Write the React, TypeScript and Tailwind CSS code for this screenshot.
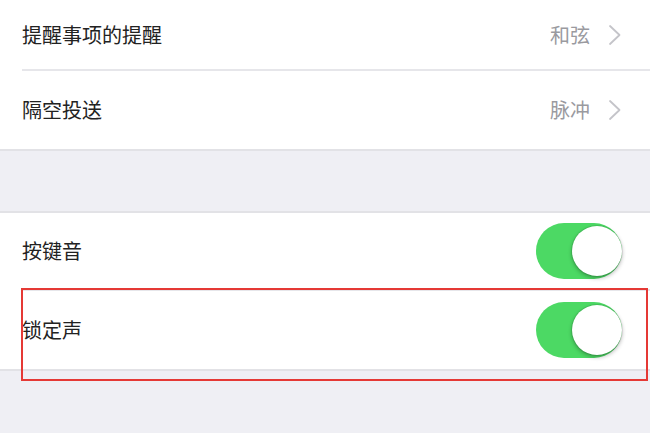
import React from "react"

const font = `"Noto Sans CJK SC", "Noto Sans", sans-serif`

function Chevron() {
  return (
    <svg width="14" height="22" viewBox="0 0 14 22" fill="none" className="ml-[18px]">
      <path d="M2 2 L11.5 11 L2 20" stroke="#c4c4c9" strokeWidth="1.8" strokeLinecap="round" strokeLinejoin="round" />
    </svg>
  )
}

function Toggle() {
  return (
    <div className="relative h-[56px] w-[86px] rounded-full bg-[#4cd964]">
      <div className="absolute right-0 top-[3px] h-[50px] w-[50px] rounded-full bg-white shadow-[0_2px_4px_rgba(0,0,0,0.3),0_0_0_1px_rgba(0,0,0,0.08)]" />
    </div>
  )
}

function Row({ label, value, toggle, height, last }: { label: string; value?: string; toggle?: boolean; height: string; last?: boolean }) {
  return (
    <div className="bg-white pl-[22px]">
      <div className={`flex items-center pr-[28px] ${height} ${last ? "" : "border-b-2 border-[#e6e6ea]"}`}>
        <span className="flex-1 text-[20px] text-[#222]">{label}</span>
        {value && (
          <div className="flex items-center">
            <span className="text-[20px] text-[#9a9a9f]">{value}</span>
            <Chevron />
          </div>
        )}
        {toggle && <Toggle />}
      </div>
    </div>
  )
}

export default function App() {
  return (
    <div className="relative h-[433px] w-[650px] overflow-hidden bg-[#efeff4]" style={{ fontFamily: font }}>
      <div className="border-b-2 border-[#e2e2e6]">
        <Row label="提醒事项的提醒" value="和弦" height="h-[71px]" />
        <Row label="隔空投送" value="脉冲" height="h-[78px]" last />
      </div>
      <div className="h-[62px] border-b-2 border-[#e2e2e6]" />
      <div className="border-b-2 border-[#e2e2e6]">
        <Row label="按键音" toggle height="h-[78px]" />
        <Row label="锁定声" toggle height="h-[78px]" last />
      </div>
      <div className="absolute left-[21px] top-[288px] h-[93px] w-[627px] border-2 border-[#e53935]" />
    </div>
  )
}
